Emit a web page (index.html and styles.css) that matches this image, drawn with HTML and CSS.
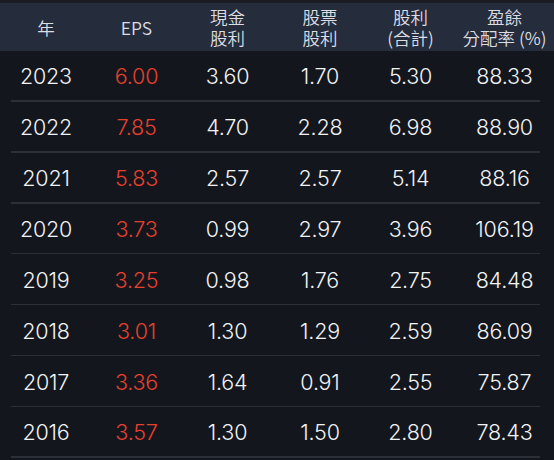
FILE: index.html
```html
<!DOCTYPE html>
<html lang="zh-Hant">
<head>
<meta charset="utf-8">
<link rel="stylesheet" href="styles.css">
</head>
<body>
<div class="page">
  <div class="head">
    <div class="hc">年</div>
    <div class="hc">EPS</div>
    <div class="hc">現金<br>股利</div>
    <div class="hc">股票<br>股利</div>
    <div class="hc">股利<br>(合計)</div>
    <div class="hc">盈餘<br>分配率 (%)</div>
  </div>
  <div class="rows">
    <div class="row"><span>2023</span><span class="red">6.00</span><span>3.60</span><span>1.70</span><span>5.30</span><span>88.33</span></div>
    <div class="row"><span>2022</span><span class="red">7.85</span><span>4.70</span><span>2.28</span><span>6.98</span><span>88.90</span></div>
    <div class="row"><span>2021</span><span class="red">5.83</span><span>2.57</span><span>2.57</span><span>5.14</span><span>88.16</span></div>
    <div class="row"><span>2020</span><span class="red">3.73</span><span>0.99</span><span>2.97</span><span>3.96</span><span>106.19</span></div>
    <div class="row"><span>2019</span><span class="red">3.25</span><span>0.98</span><span>1.76</span><span>2.75</span><span>84.48</span></div>
    <div class="row"><span>2018</span><span class="red">3.01</span><span>1.30</span><span>1.29</span><span>2.59</span><span>86.09</span></div>
    <div class="row"><span>2017</span><span class="red">3.36</span><span>1.64</span><span>0.91</span><span>2.55</span><span>75.87</span></div>
    <div class="row"><span>2016</span><span class="red">3.57</span><span>1.30</span><span>1.50</span><span>2.80</span><span>78.43</span></div>
  </div>
</div>
</body>
</html>
```
FILE: styles.css
```css
html, body {
  margin: 0;
  padding: 0;
  background: #13161c;
}
.page {
  width: 554px;
  height: 460px;
  overflow: hidden;
  font-family: Inter, "Noto Sans CJK TC", sans-serif;
  background: #13161c;
}
.head {
  display: grid;
  grid-template-columns: 92px 89px 93px 92px 89px 99px;
  height: 48px;
  border-top: 3px solid #191c23;
  background: #252c3c;
  align-items: center;
}
.hc {
  text-align: center;
  color: #dcdee3;
  font-size: 17.5px;
  line-height: 21px;
  font-weight: 350;
  font-family: "Noto Sans CJK TC", Inter, sans-serif;
}
.row {
  display: grid;
  grid-template-columns: 92px 89px 93px 92px 89px 99px;
  height: 50.86px;
  align-items: center;
  position: relative;
  box-sizing: border-box;
}
.row::after {
  content: "";
  position: absolute;
  left: 11px;
  right: 14px;
  bottom: 0;
  height: 1.5px;
  background: #2a2f38;
}
.row span {
  text-align: center;
  color: #f2f3f5;
  font-size: 21.5px;
  font-weight: 350;
  letter-spacing: -0.2px;
}
.row span.red {
  color: #e8402f;
}
```
